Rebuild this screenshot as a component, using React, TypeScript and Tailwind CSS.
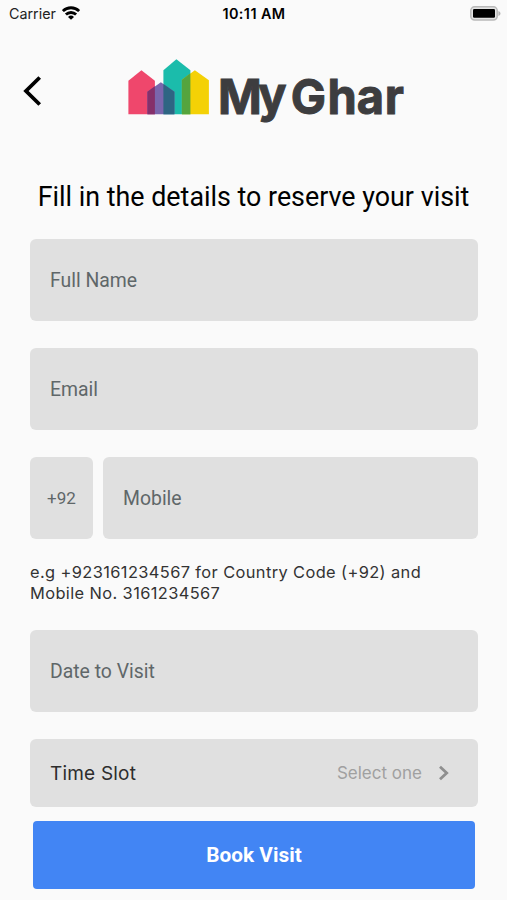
import { ReactNode } from 'react';

function StatusBar() {
  return (
    <div className="grid h-7 grid-cols-3 items-center pl-[9px] pr-[6px] font-['Inter',sans-serif] text-[14px] leading-7 text-black">
      <div className="flex items-center gap-[6px]">
        <span className="text-[14.3px] text-[#222]">Carrier</span>
        <svg className="-mt-0.5" width="18" height="14" viewBox="0 0 18 14" fill="none" stroke="#000" strokeWidth="2.8">
          <path d="M0.9 5.1a11.5 11.5 0 0 1 16.2 0" />
          <path d="M3.9 8.6a7.2 7.2 0 0 1 10.2 0" />
          <path d="M9 13.8L6 10.9a4.3 4.3 0 0 1 6 0z" fill="#000" stroke="none" />
        </svg>
      </div>
      <span className="-ml-0.5 whitespace-nowrap text-center text-[14.4px] font-semibold tracking-[0.03em]">10:11 AM</span>
      <svg className="-mt-0.5 justify-self-end" width="31" height="15" viewBox="0 0 31 15">
        <rect x="0.8" y="0.8" width="26.4" height="13.2" rx="3.8" fill="#e4e4e4" stroke="#b9b9b9" strokeWidth="1.5" />
        <rect x="3" y="3" width="22" height="8.8" rx="1.2" fill="#000" />
        <path d="M28.4 5v5c1.3-.5 2.1-1.4 2.1-2.5s-.8-2-2.1-2.5z" fill="#b5b5b5" />
      </svg>
    </div>
  );
}

function Logo() {
  return (
    <svg width="280" height="68" viewBox="0 0 280 68">
      <g transform="translate(0.4 0.2)">
        <path d="M1 21.5L14 11l13.5 10.5V55H1z" fill="#ef476c" />
        <path d="M36 11L49 0l14 11v44H36z" fill="#1bbcab" />
        <path d="M54.5 20.5L67.5 11 81.5 21v34h-27z" fill="#f4d106" />
        <path d="M54.5 20.5L63 14v41h-8.5z" fill="#55a43d" />
        <path d="M20 32.5L33.5 23 47 32.5V55H20z" fill="#7a66ad" />
        <path d="M20 32.5l7.5-5.4V55H20z" fill="#85306b" />
        <path d="M36 24.8l11 7.7V55H36z" fill="#2e6583" />
      </g>
      <g
        transform="translate(1.8 0) scale(0.97 1)"
        fill="#3d3d3f"
        stroke="#3d3d3f"
        strokeWidth="1"
        fontFamily="Inter, sans-serif"
        fontWeight="700"
        fontSize="48.5"
      >
        <text x="92 133.4" y="54.6 53.2">My</text>
        <text x="167 204.8 235 263.8" y="54.6">Ghar</text>
      </g>
    </svg>
  );
}

function Field({ children, className = '' }: { children: ReactNode; className?: string }) {
  return (
    <div
      className={`flex h-[82px] items-center rounded-md bg-[#e0e0e0] px-5 pt-0.5 text-[19.4px] text-[#5f6769] ${className}`}
    >
      {children}
    </div>
  );
}

export default function App() {
  return (
    <div className="h-[900px] w-full overflow-hidden bg-[#fafafa] font-['Roboto',sans-serif]">
      <StatusBar />
      <header className="flex h-[126px] items-center pl-[22px]">
        <button aria-label="Back">
          <svg width="20" height="32" viewBox="0 0 20 32" fill="none" stroke="#000" strokeWidth="3.8">
            <path d="M17.7 2.5L4 16l13.7 13.5" />
          </svg>
        </button>
        <div className="ml-[85px] mt-1">
          <Logo />
        </div>
      </header>
      <h1 className="mt-[25px] whitespace-nowrap text-center text-[26.85px] leading-9 text-black">
        Fill in the details to reserve your visit
      </h1>
      <main className="px-[30px] pr-[29px] pt-6">
        <div className="flex flex-col gap-[27px]">
          <Field>Full Name</Field>
          <Field>Email</Field>
          <div className="flex gap-[10px]">
            <Field className="w-[63px] justify-center px-0! text-[17px]!">+92</Field>
            <Field className="flex-1">Mobile</Field>
          </div>
        </div>
        <p className="mt-[23px] whitespace-nowrap font-['Inter',sans-serif] text-[16.4px] leading-[21px] tracking-[0.024em] text-[#333]">
          e.g +923161234567 for Country Code (+92) and
          <br />
          Mobile No. 3161234567
        </p>
        <Field className="mt-[26px]">Date to Visit</Field>
        <button className="mt-[27px] flex h-[68px] w-full items-center rounded-md bg-[#e0e0e0] pl-5 pr-7 font-['Inter',sans-serif]">
          <span className="pt-0.5 text-[19px] tracking-[0.01em] text-[#2d2d2d]">Time Slot</span>
          <span className="ml-auto pt-0.5 text-[17px] text-[#a0a0a0]">Select one</span>
          <svg className="ml-4" width="12" height="16" viewBox="0 0 12 16" fill="none" stroke="#8f8f8f" strokeWidth="2.8">
            <path d="M2 1.8L8.7 8 2 14.2" />
          </svg>
        </button>
        <button className="mx-[3px] mt-[14px] h-[68px] w-[442px] rounded bg-[#4285f4] pt-0.5 text-[20.8px] font-bold text-white">
          Book Visit
        </button>
      </main>
    </div>
  );
}
